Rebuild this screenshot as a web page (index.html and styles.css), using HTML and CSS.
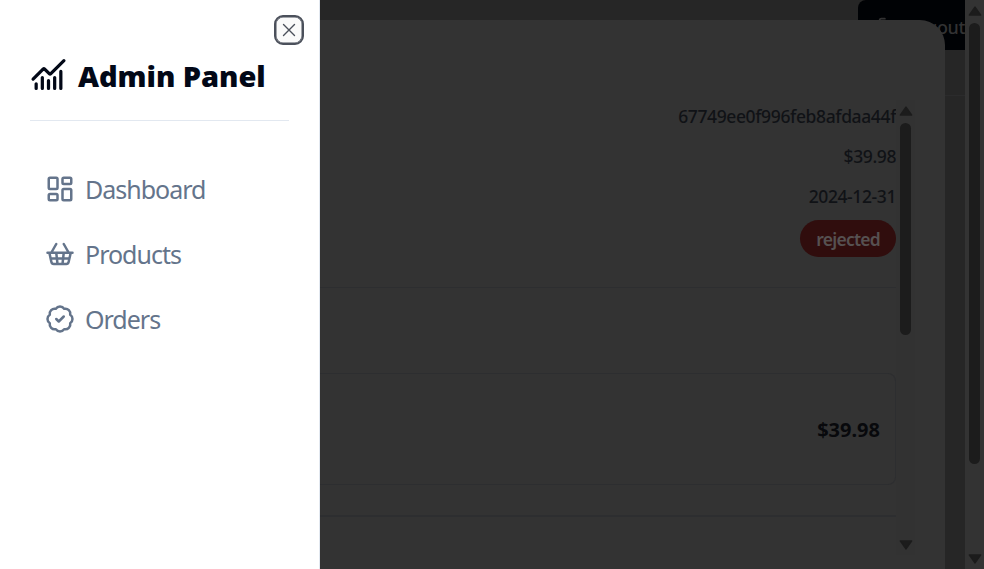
FILE: index.html
```html
<!DOCTYPE html>
<html lang="en">
<head>
<meta charset="utf-8">
<title>Admin Panel</title>
<link rel="stylesheet" href="styles.css">
</head>
<body>
<div class="app">
  <aside class="sheet">
    <button class="close" aria-label="Close"><svg viewBox="0 0 16 16"><path d="M2.5 2.5l11 11M13.5 2.5l-11 11"/></svg></button>
    <header class="brand">
      <svg class="icon logo" viewBox="0 0 24 24"><path d="M12 16v5M16 14v7M20 10v11M22 3l-8.646 8.646a.5.5 0 0 1-.708 0L9.354 8.354a.5.5 0 0 0-.707 0L2 15M4 18v3M8 14v7"/></svg>
      <h1>Admin Panel</h1>
    </header>
    <nav class="nav">
      <a class="item"><svg class="icon" viewBox="0 0 24 24"><rect width="7" height="9" x="3" y="3" rx="1"/><rect width="7" height="5" x="14" y="3" rx="1"/><rect width="7" height="9" x="14" y="12" rx="1"/><rect width="7" height="5" x="3" y="16" rx="1"/></svg><span>Dashboard</span></a>
      <a class="item"><svg class="icon" viewBox="0 0 24 24"><path d="m15 11-1 9M19 11l-4-7M2 11h20M3.5 11l1.6 7.4a2 2 0 0 0 2 1.6h9.8a2 2 0 0 0 2-1.6l1.7-7.4M4.5 15.5h15M5 11l4-7M9 11l1 9"/></svg><span>Products</span></a>
      <a class="item"><svg class="icon" viewBox="0 0 24 24"><path d="M3.85 8.62a4 4 0 0 1 4.78-4.77 4 4 0 0 1 6.74 0 4 4 0 0 1 4.78 4.78 4 4 0 0 1 0 6.74 4 4 0 0 1-4.77 4.78 4 4 0 0 1-6.75 0 4 4 0 0 1-4.78-4.77 4 4 0 0 1 0-6.76Z"/><path d="m9 12 2 2 4-4"/></svg><span>Orders</span></a>
    </nav>
  </aside>
  <main class="page">
    <div class="logout"><svg class="icon" viewBox="0 0 24 24"><path d="M9 21H5a2 2 0 0 1-2-2V5a2 2 0 0 1 2-2h4M16 17l5-5-5-5M21 12H9"/></svg><span>Logout</span></div>
    <div class="rule"></div>
    <section class="dialog">
      <div class="details">
        <div class="value id">67749ee0f996feb8afdaa44f</div>
        <div class="value">$39.98</div>
        <div class="value date">2024-12-31</div>
        <div class="value"><span class="badge">rejected</span></div>
        <div class="separator"></div>
        <div class="card">$39.98</div>
        <div class="separator last"></div>
      </div>
      <div class="bar inner">
        <svg viewBox="0 0 12 10"><path d="M6 1.5 11 8.5H1Z"/></svg>
        <i class="thumb"></i>
        <svg class="down" viewBox="0 0 12 10"><path d="M6 8.5 11 1.5H1Z"/></svg>
      </div>
    </section>
  </main>
  <div class="bar outer">
    <svg viewBox="0 0 12 10"><path d="M6 1.5 11 8.5H1Z"/></svg>
    <i class="thumb"></i>
    <svg class="down" viewBox="0 0 12 10"><path d="M6 8.5 11 1.5H1Z"/></svg>
  </div>
</div>
</body>
</html>
```
FILE: styles.css
```css
* { box-sizing: border-box; }
body { margin: 0; background: #262626; font-family: "Segoe UI", "Noto Sans", sans-serif; overflow: hidden; }
.app { display: flex; height: 569px; }
.icon { fill: none; stroke: currentColor; stroke-width: 2; stroke-linecap: round; stroke-linejoin: round; flex: none; }

.sheet { position: relative; width: 320px; flex: none; padding: 54px 30px 0; background: #fff; border-right: 1px solid #e2e8f0; }
.close { position: absolute; top: 15px; left: 274px; width: 30px; height: 30px; padding: 0; display: grid; place-items: center; background: #fafafa; border: 2px solid #4b505b; border-radius: 9px; box-shadow: inset 0 0 0 0.5px #4b505b; }
.close svg { width: 16px; height: 16px; fill: none; stroke: #4b505b; stroke-width: 1.4; stroke-linecap: round; }
.brand { display: flex; height: 67px; gap: 11px; border-bottom: 1px solid #e2e8f0; color: #020817; }
.logo { width: 37px; height: 37px; margin-top: 1.5px; stroke-width: 2.1; }
h1 { margin: 0; font-size: 29px; line-height: 43px; font-weight: 900; letter-spacing: -0.05px; white-space: nowrap; }
.nav { display: flex; flex-direction: column; padding: 35px 0 0 15px; }
.item { display: flex; align-items: center; gap: 10px; height: 65px; color: #64748b; font-size: 25px; letter-spacing: -1px; white-space: nowrap; }
.item .icon { width: 30px; height: 30px; }

.page { position: relative; flex: 1; min-width: 0; }
.logout { display: flex; align-items: center; justify-content: space-between; height: 50px; margin-left: 538px; padding-left: 19px; background: #000205; border-radius: 8px 0 0 0; color: #323233; font-size: 18px; font-weight: 500; }
.logout span { padding-top: 4px; letter-spacing: -0.4px; }
.logout .icon { width: 21px; height: 21px; margin-top: 2px; }
.rule { margin-top: 45px; height: 1px; background: #2b2b2c; }
.dialog { position: absolute; inset: 20px 20px 0 0; display: flex; padding-top: 80px; background: #333; border-radius: 0 25px 0 0; }
.details { width: 576px; }
.value { display: flex; justify-content: flex-end; align-items: center; height: 40px; padding-bottom: 1px; color: #101216; font-size: 17.5px; font-weight: 500; line-height: 24px; letter-spacing: -0.4px; }
.value:first-child { height: 36px; padding: 0 0 4px; }
.id { letter-spacing: -0.38px; }
.badge { height: 37px; padding: 0 16px; line-height: 38px; border-radius: 19px; background: #300d0d; color: #565151; font-weight: 600; margin-bottom: -6px; letter-spacing: -0.75px; }
.separator { height: 1px; margin-top: 31px; background: #2d2e30; }
.card { display: flex; align-items: center; justify-content: flex-end; height: 112px; margin-top: 85px; padding: 0 15px 0 0; border: 1px solid #2d2e30; border-left: 0; border-radius: 0 8px 8px 0; color: #08090c; font-size: 20px; font-weight: 700; }
.last { height: 2px; margin-top: 30px; }
.bar { display: flex; flex-direction: column; align-items: center; background: #323232; }
.bar svg { width: 14px; height: 12px; fill: #1c1c1c; stroke: #1c1c1c; stroke-width: 1; stroke-linejoin: round; flex: none; }
.down { margin-top: auto; }
.thumb { width: 11px; border-radius: 6px; background: #1c1c1c; }
.inner { width: 19px; height: 455px; padding: 5px 0 4px; }
.inner .thumb { height: 212px; margin-top: 6px; }
.outer { width: 19px; height: 569px; padding: 5px 0 4px; background: #333; }
.outer .thumb { height: 441px; margin-top: 6px; }
```
